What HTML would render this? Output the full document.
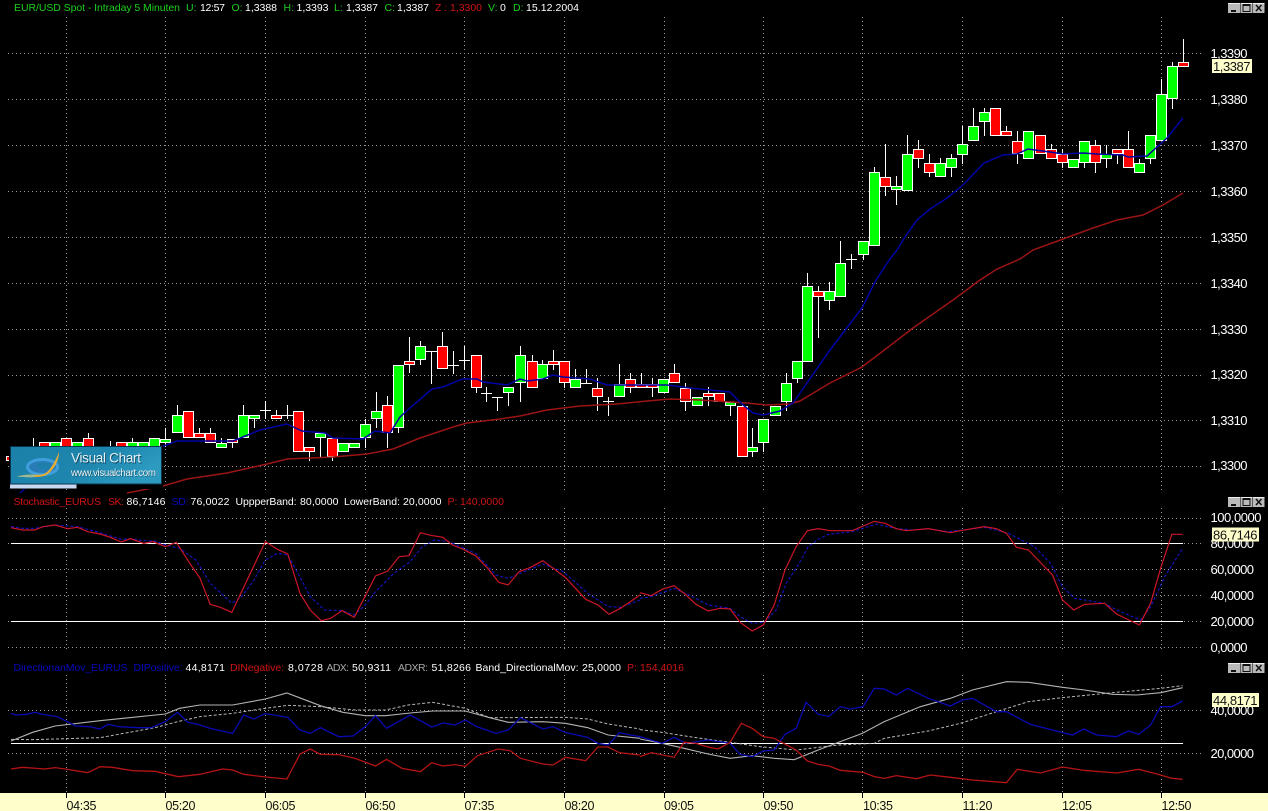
<!DOCTYPE html>
<html><head><meta charset="utf-8"><title>EUR/USD Spot</title>
<style>
html,body{margin:0;padding:0;background:#000;overflow:hidden}
svg{display:block}
text{font-family:"Liberation Sans",Arial,sans-serif}
.h text{font-size:10.5px}
.ax text{font-size:13px;fill:#fff}
.t text{font-size:12.5px;fill:#111}
.g{fill:#1cd01c}.w{fill:#fff}.r{fill:#d01414}.b{fill:#0808c0}.a{fill:#a8a8a8}
polyline{fill:none;vector-effect:non-scaling-stroke}
</style></head><body>
<svg width="1268" height="811" viewBox="0 0 1268 811" xmlns="http://www.w3.org/2000/svg" lengthAdjust="spacingAndGlyphs">
<defs>
<linearGradient id="lg" x1="0" y1="0" x2="1" y2="0.4"><stop offset="0" stop-color="#1b80a8"/><stop offset="0.6" stop-color="#1e86ae"/><stop offset="1" stop-color="#2d9ac0"/></linearGradient>
<g id="btn">
<rect x="0" y="0" width="12" height="10" fill="#b9b9b9"/><rect x="0" y="0" width="12" height="1" fill="#eee"/>
<rect x="12.5" y="0" width="12" height="10" fill="#b9b9b9"/><rect x="12.5" y="0" width="12" height="1" fill="#eee"/>
<rect x="25" y="0" width="11.5" height="10" fill="#b9b9b9"/><rect x="25" y="0" width="11.5" height="1" fill="#eee"/>
<rect x="3" y="7" width="5" height="2" fill="#111"/>
<rect x="15" y="1.5" width="7" height="7" fill="none" stroke="#111" stroke-width="1"/><rect x="15" y="1" width="7.5" height="2" fill="#111"/>
<path d="M28 2l5.500 6M33.500 2l-5.500 6" stroke="#111" stroke-width="1.500" fill="none"/>
</g>
</defs>

<!-- grid -->
<g stroke="#9a9a9a" stroke-width="1" stroke-dasharray="1 3" shape-rendering="crispEdges" fill="none">
<path d="M8 53.500H1203M8 99.500H1203M8 145.500H1203M8 191.500H1203M8 237.500H1203M8 283.500H1203M8 329.500H1203M8 375.500H1203M8 420.500H1203M8 466.500H1203"/>
<path d="M8 518.500H1203M8 543.500H1203M8 569.500H1203M8 595.500H1203M8 621.500H1203M8 647.500H1203"/>
<path d="M8 710.500H1203M8 753.500H1203"/>
<path d="M66.500 17V492M165.500 17V492M265.500 17V492M365.500 17V492M464.500 17V492M564.500 17V492M664.500 17V492M763.500 17V492M862.500 17V492M962.500 17V492M1062.500 17V492M1161.500 17V492"/>
<path d="M66.500 508V650M165.500 508V650M265.500 508V650M365.500 508V650M464.500 508V650M564.500 508V650M664.500 508V650M763.500 508V650M862.500 508V650M962.500 508V650M1062.500 508V650M1161.500 508V650"/>
<path d="M66.500 675V793M165.500 675V793M265.500 675V793M365.500 675V793M464.500 675V793M564.500 675V793M664.500 675V793M763.500 675V793M862.500 675V793M962.500 675V793M1062.500 675V793M1161.500 675V793"/>
</g>

<!-- wicks and dojis -->
<path stroke="#fff" stroke-width="1" fill="none" shape-rendering="crispEdges" d="
M33.500 438V447M110.500 441V447M88.500 433V440M132.500 438V444M165.500 428V447M177.500 405V416M199.500 428V434M210.500 428V434M221.500 438V444M232.500 443V448M243.500 405V416M254.500 419V428
M265.500 401V419M260 410.500H271M276.500 410V416M287.500 405V419M282 415.500H293M309.500 452V461M320.500 438V457M332.500 457V461M365.500 419V448M376.500 392V428M387.500 396V448M398.500 428V433
M409.500 337V373M420.500 341V365M431.500 351V384M426 351.500H437M442.500 332V347M453.500 351V374M448 365.500H459M464.500 346V370M459 360.500H470M476.500 388V393M486.500 387V402M481 393.500H492M497.500 397V411M492 397.500H503M508.500 393V406M520.500 346V402M532.500 355V362M542.500 360V365M553.500 350V370M564.500 383V388M575.500 369V380M586.500 369V384M581 383.500H592M597.500 378V411M608.500 397V416M603 401.500H614M619.500 364V385M630.500 373V393M641.500 373V385M652.500 378V397M674.500 364V374M685.500 383V411M708.500 387V406M730.500 406V416M742.500 402V407M752.500 428V457M763.500 443V452M786.500 373V411M797.500 379V383
M807.500 273V287M818.500 286V338M829.500 282V310M840.500 241V264M851.500 254V269M846 259.500H857M863.500 255V260M874.500 167V173M885.500 144V196M896.500 176V205M907.500 135V155M918.500 140V168M929.500 154V177M940.500 158V164M951.500 154V177M962.500 126V164M973.500 108V127M984.500 108V136M1006.500 126V132M1017.500 131V164M1051.500 144V150M1062.500 149V168M1084.500 163V168M1095.500 140V173M1106.500 145V168M1117.500 154V164M1128.500 131V150M1139.500 159V164M1150.500 159V164M1161.500 79V95M1172.500 62V109M1183.500 39V63"/>

<!-- green bodies -->
<path fill="#00ff00" stroke="#fff" stroke-width="1" shape-rendering="crispEdges" d="
M50.500 442.500h10V452h-10zM72.500 442.500h10V452h-10zM127.500 442.500h10V452h-10zM138.500 442.500h10V452h-10zM149.500 438.500h10V452h-10zM160.500 439.500h10V442.500h-10z
M172.500 415.500h10V432.500h-10zM216.500 443.500h10V447.500h-10zM238.500 415.500h10V437.500h-10zM249.500 415.500h10V418.500h-10zM315.500 433.500h10V437.500h-10zM338.500 443.500h10V451.500h-10zM349.500 443.500h10V447.500h-10zM360.500 424.500h10V437.500h-10zM371.500 411.500h10V418.500h-10zM393.500 365.500h10V427.500h-10z
M415.500 346.500h10V359.500h-10zM503.500 387.500h10V392.500h-10zM515.500 355.500h10V382.500h-10zM537.500 364.500h10V378.500h-10zM570.500 379.500h10V387.500h-10zM614.500 384.500h10V396.500h-10zM658.500 379.500h10V392.500h-10zM692.500 397.500h10V405.500h-10zM725.500 402.500h10V405.500h-10zM747.500 447.500h10V451.500h-10zM758.500 419.500h10V442.500h-10zM770.500 406.500h10V415.500h-10zM781.500 383.500h10V401.500h-10zM792.500 361.500h10V378.500h-10z
M802.500 286.500h10V361.500h-10zM824.500 291.500h10V300.500h-10zM835.500 263.500h10V296.500h-10zM858.500 241.500h10V254.500h-10zM869.500 172.500h10V245.500h-10zM891.500 186.500h10V189.500h-10zM902.500 154.500h10V190.500h-10zM935.500 163.500h10V176.500h-10zM946.500 158.500h10V167.500h-10zM957.500 144.500h10V154.500h-10zM968.500 126.500h10V140.500h-10zM979.500 112.500h10V121.500h-10zM1023.500 131.500h10V158.500h-10zM1068.500 159.500h10V167.500h-10zM1079.500 141.500h10V162.500h-10zM1101.500 154.500h10V158.500h-10zM1134.500 163.500h10V172.500h-10zM1145.500 135.500h10V158.500h-10zM1156.500 94.500h10V140.500h-10zM1167.500 66.500h10V98.500h-10z"/>

<!-- red bodies -->
<path fill="#ff0000" stroke="#fff" stroke-width="1" shape-rendering="crispEdges" d="
M6.500 456.500h4V460.500h-4zM39.500 442.500h10V452h-10zM61.500 438.500h10V452h-10zM83.500 438.500h10V452h-10zM116.500 442.500h10V452h-10z
M183.500 411.500h10V437.500h-10zM194.500 433.500h10V437.500h-10zM205.500 433.500h10V442.500h-10zM227.500 439.500h10V442.500h-10zM271.500 415.500h10V418.500h-10zM293.500 411.500h10V451.500h-10zM304.500 447.500h10V451.500h-10zM327.500 438.500h10V456.500h-10zM382.500 405.500h10V432.500h-10z
M404.500 361.500h10V364.500h-10zM437.500 346.500h10V368.500h-10zM471.500 355.500h10V387.500h-10zM527.500 361.500h10V387.500h-10zM548.500 361.500h10V364.500h-10zM559.500 361.500h10V382.500h-10zM592.500 388.500h10V396.500h-10zM625.500 379.500h10V387.500h-10zM636.500 384.500h10V387.500h-10zM647.500 384.500h10V387.500h-10zM669.500 373.500h10V382.500h-10zM680.500 388.500h10V401.500h-10zM703.500 393.500h10V396.500h-10zM714.500 393.500h10V401.500h-10zM737.500 406.500h10V456.500h-10z
M813.500 291.500h10V296.500h-10zM880.500 177.500h10V186.500h-10zM913.500 149.500h10V158.500h-10zM924.500 163.500h10V172.500h-10zM990.500 108.500h10V135.500h-10zM1001.500 131.500h10V135.500h-10zM1012.500 141.500h10V153.500h-10zM1035.500 135.500h10V153.500h-10zM1046.500 149.500h10V158.500h-10zM1057.500 154.500h10V162.500h-10zM1090.500 145.500h10V162.500h-10zM1112.500 149.500h10V153.500h-10zM1123.500 149.500h10V167.500h-10zM1178.500 62.500h10V66.500h-10z"/>

<!-- moving averages -->
<polyline stroke="#9a1414" stroke-width="1.500" points="127,493 163,486 187,479 227,473 267,464 287,459 333,457 367,454 393,449 420,438 453,427 467,423 500,419 520,416 547,410 580,406 617,404 647,401 670,399 700,400 747,403 767,405 790,404 800,401 830,383 862,367 887,348 913,328 953,300 980,280 997,269 1020,259 1033,250 1063,239 1093,228 1117,220 1143,215 1163,205 1183,193"/>
<polyline stroke="#0000a4" stroke-width="1.500" points="20,493 30,484 100,455 161,447 177,441 233,441 260,430 287,424 302,431 325,433 333,438 363,439 375,431 390,433 400,417 410,408 432,389 443,387 462,379 477,379 483,382 507,385 520,379 527,381 543,379 553,375 563,377 590,379 607,385 633,385 667,385 690,388 730,392 743,405 753,413 763,415 780,411 793,403 800,393 830,350 862,308 875,282 887,263 897,250 905,237 917,220 930,209 947,198 962,186 984,163 1003,155 1017,154 1028,149 1050,152 1063,154 1083,153 1097,154 1123,155 1128,157 1147,156 1167,138 1183,118"/>

<!-- header -->
<g class="h">
<text x="14" y="11" class="g" textLength="166">EUR/USD Spot - Intraday 5 Minuten</text>
<text x="186" y="11" class="g">U:</text><text x="200" y="11" class="w" textLength="25">12:57</text>
<text x="231.500" y="11" class="g">O:</text><text x="245" y="11" class="w" textLength="32">1,3388</text>
<text x="283.500" y="11" class="g">H:</text><text x="296.500" y="11" class="w" textLength="32">1,3393</text>
<text x="334" y="11" class="g">L:</text><text x="346" y="11" class="w" textLength="32">1,3387</text>
<text x="384.500" y="11" class="g">C:</text><text x="397" y="11" class="w" textLength="32">1,3387</text>
<text x="435" y="11" class="r">Z :</text><text x="450" y="11" class="r" textLength="32">1,3300</text>
<text x="488" y="11" class="g">V:</text><text x="500" y="11" class="w">0</text>
<text x="513" y="11" class="g">D:</text><text x="526" y="11" class="w" textLength="53">15.12.2004</text>
</g>

<!-- stochastic panel -->
<path stroke="#fff" stroke-width="1" fill="none" shape-rendering="crispEdges" d="M11 543.500H1183M11 621.500H1183"/>
<g transform="translate(0,490) scale(.40816,.33333)">
<polyline stroke="#1414c8" stroke-width="1.100" stroke-dasharray="3 2" points="27,110 55,115 85,115 135,105 190,110 245,128 297,148 320,146 352,152 380,153 405,165 440,175 480,210 515,280 568,340 590,322 620,275 650,210 680,190 705,195 730,250 760,320 795,360 838,362 868,375 895,345 920,305 965,250 1005,215 1035,170 1065,150 1100,155 1165,190 1215,255 1245,265 1275,250 1330,222 1380,245 1440,310 1490,350 1520,352 1568,330"/>
<polyline stroke="#cc1628" stroke-width="1.200" points="27,113 55,120 85,120 105,110 135,105 165,116 190,112 215,125 245,132 270,142 297,156 320,146 352,160 375,155 405,170 432,157 465,220 490,265 515,343 540,352 568,367 650,155 680,178 705,192 735,310 760,360 787,392 810,385 838,362 868,382 920,258 950,243 978,200 1002,197 1030,128 1055,136 1085,142 1108,165 1135,178 1165,197 1195,235 1222,277 1245,285 1272,245 1300,232 1330,212 1385,262 1435,328 1465,345 1492,373 1520,355 1568,315"/>
</g>
<g transform="translate(640,490) scale(.40048,.33333)">
<polyline stroke="#1414c8" stroke-width="1.100" stroke-dasharray="3 2" points="0,325 28,320 85,295 140,325 170,345 225,355 250,380 280,400 310,397 340,360 365,280 395,225 420,170 445,148 470,133 530,125 590,102 640,116 680,120 720,116 770,125 860,112 920,130 985,170 1025,220 1055,290 1085,325 1160,340 1190,360 1250,390 1275,350 1310,260 1355,175"/>
<polyline stroke="#cc1628" stroke-width="1.200" points="0,308 28,317 55,298 85,287 110,310 140,343 170,363 200,355 225,357 250,397 280,423 308,405 335,345 362,240 390,170 418,122 445,116 475,122 530,122 585,94 612,100 640,116 665,122 720,116 775,128 800,122 860,110 890,116 915,130 940,172 970,180 1030,255 1055,330 1083,360 1110,343 1160,340 1190,372 1247,405 1275,340 1300,235 1328,133 1355,133"/>
</g>
<g class="h">
<text x="13.500" y="505" class="r" textLength="87.500">Stochastic_EURUS</text>
<text x="108" y="505" class="r" textLength="16">SK:</text><text x="126.500" y="505" class="w" textLength="39">86,7146</text>
<text x="171.500" y="505" class="b" textLength="17">SD:</text><text x="190.500" y="505" class="w" textLength="39">76,0022</text>
<text x="235.500" y="505" class="w" textLength="61">UppperBand:</text><text x="300" y="505" class="w" textLength="38.500">80,0000</text>
<text x="344" y="505" class="w" textLength="56">LowerBand:</text><text x="403" y="505" class="w" textLength="38.500">20,0000</text>
<text x="447.500" y="505" class="r">P:</text><text x="460" y="505" class="r" textLength="44">140,0000</text>
</g>

<!-- DMI panel -->
<path stroke="#fff" stroke-width="1" fill="none" shape-rendering="crispEdges" d="M11 743.500H1183"/>
<g transform="translate(0,655) scale(.40816,.33333)">
<polyline stroke="#b8b8b8" stroke-width="1" stroke-dasharray="3 2" points="27,253 80,254 245,248 380,218 435,200 490,185 570,175 650,160 705,151 785,155 870,165 945,165 1000,150 1060,142 1140,160 1200,188 1385,187 1440,192 1490,207 1568,222"/>
<polyline stroke="#b4b4b4" stroke-width="1.100" points="27,258 80,232 135,213 245,197 405,177 440,160 490,150 570,150 650,132 703,114 785,152 840,172 895,182 945,182 1005,174 1060,168 1140,168 1200,188 1245,202 1330,200 1385,205 1440,218 1490,240 1568,250"/>
<polyline stroke="#0a0ab4" stroke-width="1.300" points="27,175 40,180 65,178 85,172 105,178 140,185 165,200 185,213 220,215 245,222 265,208 290,215 340,218 370,218 405,200 435,172 460,202 485,208 515,220 570,235 597,180 622,192 650,176 705,187 735,225 760,235 785,218 830,245 865,243 895,215 920,182 947,220 1005,180 1058,216 1085,204 1115,210 1140,195 1168,215 1215,235 1245,225 1275,188 1330,222 1355,215 1385,232 1440,247 1465,265 1490,270 1517,233 1545,240 1568,245"/>
<polyline stroke="#b41414" stroke-width="1.300" points="27,342 55,337 110,342 135,338 165,343 215,353 245,335 275,337 325,347 380,349 437,365 490,358 545,342 570,345 597,358 650,366 703,372 735,297 760,282 785,298 830,299 870,310 920,333 947,313 985,340 1030,350 1058,323 1085,333 1115,329 1140,334 1170,302 1220,282 1250,287 1275,310 1330,327 1355,330 1385,307 1435,317 1465,276 1490,276 1517,293 1568,300"/>
</g>
<g transform="translate(640,655) scale(.40048,.33333)">
<polyline stroke="#b8b8b8" stroke-width="1" stroke-dasharray="3 2" points="0,224 55,232 140,248 225,262 300,275 390,285 440,278 495,270 585,265 610,250 720,228 800,205 890,170 970,140 1055,128 1180,113 1300,100 1355,92"/>
<polyline stroke="#b4b4b4" stroke-width="1.100" points="0,252 55,265 110,280 170,297 225,310 280,302 335,310 385,314 445,285 500,260 555,235 610,200 670,170 700,155 775,130 830,105 915,80 970,82 1055,97 1110,105 1180,118 1240,120 1300,113 1355,98"/>
<polyline stroke="#0a0ab4" stroke-width="1.300" points="0,245 55,265 85,247 115,265 170,255 225,265 250,298 280,305 308,288 335,285 362,238 390,220 415,142 445,178 472,184 500,155 525,162 557,155 585,100 610,102 640,120 668,100 720,130 775,153 805,135 830,130 890,170 915,170 975,208 1030,225 1080,240 1108,222 1140,240 1190,245 1220,228 1245,238 1275,210 1300,155 1328,155 1355,138"/>
<polyline stroke="#b41414" stroke-width="1.300" points="0,305 28,293 85,307 110,262 140,265 170,276 195,282 225,262 253,205 280,220 308,245 335,250 390,285 418,318 445,328 472,333 500,346 557,352 585,365 610,370 640,362 690,371 725,360 775,367 830,375 915,383 942,343 1000,354 1055,336 1108,346 1190,354 1245,343 1300,360 1328,370 1355,373"/>
</g>
<g class="h">
<text x="13.500" y="671" class="b" textLength="114">DirectionanMov_EURUS</text>
<text x="133.500" y="671" class="b" textLength="49">DIPositive:</text><text x="185.500" y="671" class="w" textLength="39.500">44,8171</text>
<text x="230" y="671" class="r" textLength="54">DINegative:</text><text x="288" y="671" class="w" textLength="35">8,0728</text>
<text x="326.500" y="671" class="a" textLength="22.500">ADX:</text><text x="352" y="671" class="w" textLength="39">50,9311</text>
<text x="398" y="671" class="a" textLength="30">ADXR:</text><text x="431.500" y="671" class="w" textLength="39.500">51,8266</text>
<text x="475.500" y="671" class="w" textLength="103">Band_DirectionalMov:</text><text x="582" y="671" class="w" textLength="39">25,0000</text>
<text x="627" y="671" class="r">P:</text><text x="640" y="671" class="r" textLength="44">154,4016</text>
</g>

<!-- right axis -->
<g class="ax">
<text x="1210.500" y="58" textLength="37">1,3390</text>
<text x="1210.500" y="104" textLength="37">1,3380</text>
<text x="1210.500" y="150" textLength="37">1,3370</text>
<text x="1210.500" y="196" textLength="37">1,3360</text>
<text x="1210.500" y="242" textLength="37">1,3350</text>
<text x="1210.500" y="288" textLength="37">1,3340</text>
<text x="1210.500" y="334" textLength="37">1,3330</text>
<text x="1210.500" y="379" textLength="37">1,3320</text>
<text x="1210.500" y="425" textLength="37">1,3310</text>
<text x="1210.500" y="470" textLength="37">1,3300</text>
<text x="1210.500" y="522" textLength="51">100,0000</text>
<text x="1210.500" y="548" textLength="43.500">80,0000</text>
<text x="1210.500" y="574" textLength="43.500">60,0000</text>
<text x="1210.500" y="600" textLength="43.500">40,0000</text>
<text x="1210.500" y="626" textLength="43.500">20,0000</text>
<text x="1210.500" y="652" textLength="37">0,0000</text>
<text x="1210.500" y="715" textLength="43.500">40,0000</text>
<text x="1210.500" y="758" textLength="43.500">20,0000</text>
</g>
<rect x="1212" y="59" width="40" height="14" fill="#ffffcc"/>
<rect x="1212" y="527.500" width="47" height="14" fill="#ffffcc"/>
<rect x="1212" y="693" width="47" height="14" fill="#ffffcc"/>
<g style="font-size:13px" fill="#111">
<text x="1213" y="71" textLength="37.500">1,3387</text>
<text x="1213" y="539.500" textLength="44.500">86,7146</text>
<text x="1213" y="705" textLength="44.500">44,8171</text>
</g>

<!-- window buttons -->
<use href="#btn" x="1228" y="3"/>
<use href="#btn" x="1228" y="497"/>
<use href="#btn" x="1228" y="663"/>

<!-- time axis -->
<rect x="0" y="793" width="1268" height="18" fill="#ffffcc"/>
<path stroke="#000" stroke-width="1" shape-rendering="crispEdges" d="M66.500 793V798M165.500 793V798M265.500 793V798M365.500 793V798M464.500 793V798M564.500 793V798M664.500 793V798M763.500 793V798M862.500 793V798M962.500 793V798M1062.500 793V798M1161.500 793V798"/>
<g class="t">
<text x="66.500" y="810" textLength="30">04:35</text>
<text x="165.500" y="810" textLength="30">05:20</text>
<text x="265.500" y="810" textLength="30">06:05</text>
<text x="365.500" y="810" textLength="30">06:50</text>
<text x="464.500" y="810" textLength="30">07:35</text>
<text x="564.500" y="810" textLength="30">08:20</text>
<text x="664" y="810" textLength="30">09:05</text>
<text x="763.500" y="810" textLength="30">09:50</text>
<text x="863" y="810" textLength="30">10:35</text>
<text x="962.500" y="810" textLength="30">11:20</text>
<text x="1062" y="810" textLength="30">12:05</text>
<text x="1161.500" y="810" textLength="30">12:50</text>
</g>

<!-- logo -->
<rect x="9" y="446" width="154" height="43" fill="#000"/>
<rect x="10" y="484.500" width="66.500" height="4" fill="#c8d8f0"/>
<rect x="10.500" y="446.500" width="151" height="37.500" fill="url(#lg)" stroke="#0a3550" stroke-width="1"/>
<ellipse cx="42.500" cy="467" rx="15" ry="7.500" fill="#2a7cb6" stroke="#3f9fdc" stroke-width="3"/>
<ellipse cx="44" cy="466" rx="7" ry="3.500" fill="#1c80ab"/>
<path d="M17 476.500C30 473 36 476 44 474C50 471 55 462 59 452C59 462 52 473 44 476C34 478 26 477 17 476.500Z" fill="#e9ac32"/>
<path d="M17 476.500C24 474.500 30 474.500 36 475L34 477C28 477.500 22 477 17 476.500Z" fill="#9ab89a"/>
<g>
<text x="71.800" y="463.700" style="font-size:13.500px" fill="#0a4660" textLength="70">Visual Chart</text>
<text x="71" y="462.700" style="font-size:13.500px" fill="#e6f3f8" textLength="70">Visual Chart</text>
<text x="71.600" y="476.600" style="font-size:9.800px" fill="#0a4660" textLength="85">www.visualchart.com</text>
<text x="71" y="475.800" style="font-size:9.800px" fill="#eef7fa" textLength="85">www.visualchart.com</text>
</g>
</svg>
</body></html>
